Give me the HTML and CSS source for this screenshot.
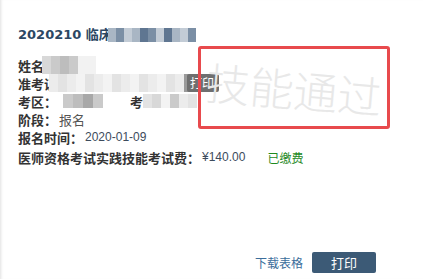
FILE: index.html
```html
<!DOCTYPE html>
<html>
<head>
<meta charset="utf-8">
<link rel="stylesheet" href="styles.css">
</head>
<body>
<div class="panel">
  <div class="content">
    <h1 class="title">2020210 临床<span class="mosaic mt"><i class="c1"></i><i class="c2"></i><i class="c3"></i><i class="c1"></i><i class="c4"></i><i class="c2"></i><i class="c3"></i><i class="c4"></i><i class="c1"></i><i class="c3"></i><i class="c2"></i></span></h1>
    <div class="rows">
      <div class="row"><b>姓名</b><span class="mosaic mn"><i class="g1"></i><i class="g2"></i><i class="g3"></i><i class="g2"></i><i class="g0"></i><i class="g0"></i></span></div>
      <div class="row"><b>准考证</b><span class="mosaic mz"><i class="w1"></i><i class="w2"></i><i class="w1"></i><i class="w3"></i><i class="w2"></i><i class="w1"></i><i class="w3"></i><i class="w2"></i><i class="w1"></i><i class="w3"></i><i class="w2"></i><i class="w1"></i><i class="w3"></i><i class="w2"></i><i class="w1"></i><i class="wd"></i></span><span class="tip">打印</span></div>
      <div class="row"><b>考区：</b><span class="mosaic mk"><i class="g2"></i><i class="g3"></i><i class="g4"></i><i class="g2"></i></span><b class="kao">考</b><span class="mosaic mk2"><i class="w2"></i><i class="g1"></i><i class="w3"></i><i class="g2"></i><i class="w1"></i><i class="w2"></i></span></div>
      <div class="row"><b>阶段：</b><span class="val">报名</span></div>
      <div class="row"><b>报名时间：</b><span class="val num">2020-01-09</span></div>
      <div class="row fee"><b>医师资格考试实践技能考试费：</b><span class="val num">¥140.00</span><span class="paid">已缴费</span></div>
    </div>
    <div class="stamp"><span>技能通过</span></div>
  </div>
  <div class="actions">
    <a class="download">下载表格</a>
    <button class="print">打印</button>
  </div>
</div>
</body>
</html>
```
FILE: styles.css
```css
html, body {
  margin: 0;
  padding: 0;
  background: #fff;
}
body {
  width: 423px;
  height: 279px;
  overflow: hidden;
  font-family: "Noto Sans CJK SC", "Liberation Sans", sans-serif;
  font-size: 13px;
  color: #333;
}
.panel {
  position: relative;
  height: 279px;
  box-shadow: inset 3px 0 3px -2px rgba(0,0,0,0.12);
  display: flex;
  flex-direction: column;
}
.content {
  position: relative;
  padding: 27px 0 0 18px;
  flex: 1;
}
.title {
  margin: 0;
  font-family: "DejaVu Sans", "Noto Sans CJK SC", sans-serif;
  font-size: 13px;
  font-weight: bold;
  color: #2c4763;
  line-height: 16px;
  height: 16px;
  display: flex;
  align-items: center;
}
.mosaic {
  display: inline-flex;
  filter: blur(0.6px);
}
.mosaic i {
  display: block;
  width: 8px;
}
.mt { height: 14px; margin-left: -4px; }
.mt i { height: 14px; }
.c1 { background: #a9b6c4; }
.c2 { background: #7b8fa5; }
.c3 { background: #c3ccd6; }
.c4 { background: #5f7691; }
.rows {
  margin-top: 13px;
}
.row {
  display: flex;
  align-items: center;
  height: 18px;
  white-space: nowrap;
  position: relative;
}
.row b {
  font-weight: bold;
  color: #333;
}
.mosaic.mn { height: 18px; margin-left: -2px; }
.mn i { width: 9px; height: 18px; }
.g0 { background: #f2f2f2; }
.g1 { background: #d8d8d8; }
.g2 { background: #cacaca; }
.g3 { background: #bdbdbd; }
.g4 { background: #a8a8a8; }
.w1 { background: #ececec; }
.w2 { background: #e3e3e3; }
.w3 { background: #f3f3f3; }
.wd { background: #9a9a9a; }
.mz { height: 18px; margin-left: -8px; }
.mz i { width: 9px; height: 18px; }
.tip {
  position: absolute;
  left: 169px;
  top: 0;
  background: #6f6f6f;
  color: #fff;
  font-size: 12px;
  line-height: 18px;
  padding: 0 5px 0 3px;
  border-radius: 2px;
}
.mk { height: 14px; margin-left: 6px; }
.mk i { width: 10px; height: 14px; }
.kao { margin-left: 27px; }
.mk2 { height: 14px; margin-left: 0; }
.mk2 i { width: 9px; height: 14px; }
.val {
  color: #555;
  margin-left: 2px;
}
.num {
  font-family: "Liberation Sans", "Noto Sans CJK SC", sans-serif;
  font-size: 12px;
  color: #3d4b5c;
}
.fee {
  margin-top: 2px;
}
.paid {
  color: #1f8a1f;
  margin-left: 22px;
  font-size: 12px;
}
.stamp {
  position: absolute;
  left: 198px;
  top: 46px;
  width: 186px;
  height: 77px;
  border: 3px solid #e84a4d;
  border-radius: 3px;
  display: flex;
  align-items: center;
  justify-content: center;
  overflow: hidden;
}
.stamp span {
  font-size: 44px;
  font-weight: 300;
  color: #e8e8e8;
  transform: rotate(5deg);
  letter-spacing: 0;
  white-space: nowrap;
  line-height: 1;
}
.actions {
  display: flex;
  justify-content: flex-end;
  align-items: center;
  gap: 9px;
  padding: 0 47px 6px 0;
  height: 21px;
}
.download {
  color: #3b6d9b;
  font-size: 12px;
  cursor: pointer;
}
.print {
  width: 64px;
  height: 21px;
  border: none;
  border-radius: 2px;
  background: #3c5a76;
  color: #fff;
  font-family: "Noto Sans CJK SC", sans-serif;
  font-size: 13px;
  padding: 0;
}
```
